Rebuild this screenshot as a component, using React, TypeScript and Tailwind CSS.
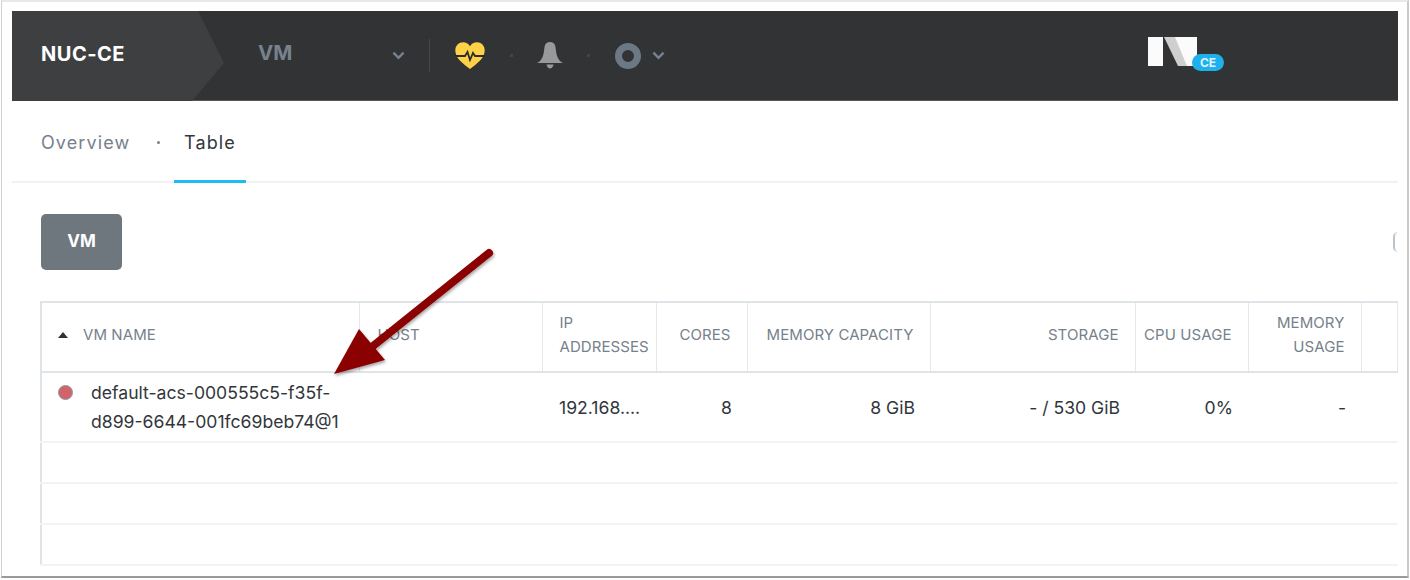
import React from "react";

const Chevron = ({ className }: { className: string }) => (
  <svg viewBox="0 0 14 9" className={className} fill="none" stroke="#76838e" strokeWidth="2.6">
    <path d="M1.5 1.5 7 7l5.5-5.5" />
  </svg>
);

const th = "border-r border-b-2 border-[#e3e8ec] border-b-[#dfe4e8] font-normal text-[15px] tracking-[0.08px] leading-[24px] text-[#76818b] align-middle pb-[5px]";
const td = "border-b-2 border-[#f2f3f5] text-[17.6px] leading-[29px] text-[#32363b] align-middle";

export default function App() {
  return (
    <div className="w-[1410px] h-[580px] bg-white overflow-hidden font-['Inter',sans-serif]">
      <div className="relative h-[578px] ml-[1px] mr-[1px] border-l border-r-2 border-t-2 border-b-2 border-l-[#cfcfcf] border-r-[#c9c9c9] border-t-[#e8e8e8] border-b-[#9a9a9a] pl-[10px] pr-[9px] pt-[9px] overflow-hidden">
        <div className="h-[90px] flex items-center bg-[#323335] border-b border-[#55575a] relative">
          <div className="relative h-full w-[212px] shrink-0 flex items-center pl-[29px]">
            <svg viewBox="0 0 212 90" className="absolute inset-0 w-[212px] h-[90px]">
              <polygon points="0,0 186,0 212,52 180,90 0,90" fill="#3e3f41" />
            </svg>
            <span className="relative text-white font-bold text-[20px] tracking-[0.5px] mt-[-4px]">NUC-CE</span>
          </div>
          <span className="ml-[34px] w-[134px] shrink-0 text-[#76838e] font-bold text-[20.500px] mt-[-4px]">VM</span>
          <Chevron className="w-[13px] h-[9px] shrink-0" />
          <div className="ml-[24px] w-px h-[33px] bg-[#46484a] shrink-0" />
          <svg viewBox="0 0 30 27" className="ml-[25px] w-[30px] h-[27px] shrink-0">
            <path d="M15 27C8 21.500 .5 16.500 .3 8.500 .2 3.500 4 .3 8 .3c3 0 5.500 1.500 7 4 1.500-2.500 4-4 7-4 4 0 7.800 3.200 7.700 8.200C29.500 16.500 22 21.500 15 27Z" fill="#fed146" />
            <path d="M0 14h10l2.500-4 2.500 8 3-7 2 3h10" fill="none" stroke="#2b2c2e" strokeWidth="1.800" />
          </svg>
          <div className="ml-[25px] w-[3px] h-[3px] bg-[#424446] shrink-0" />
          <svg viewBox="0 0 26 27" className="ml-[24px] w-[26px] h-[27px] shrink-0" fill="#97999b">
            <path d="M13 0c3 0 5 1.800 5.500 5 .6 4 .5 8 3 12 1 1.700 2.500 3.300 4.500 4H0c2-.7 3.500-2.300 4.500-4 2.500-4 2.400-8 3-12C8 1.800 10 0 13 0Z" />
            <path d="M9.500 22.500h7c-.5 2.500-2 4-3.500 4s-3-1.500-3.500-4Z" />
          </svg>
          <div className="ml-[24px] w-[3px] h-[3px] bg-[#424446] shrink-0" />
          <div className="ml-[25px] w-[26px] h-[26px] rounded-full border-[7px] border-[#6c7883] shrink-0" />
          <Chevron className="ml-[11px] w-[13px] h-[9px] shrink-0" />
          <div className="relative ml-[483px] w-[76px] h-[34px] shrink-0 mt-[-4px]">
            <svg viewBox="0 0 49 29" className="absolute left-0 top-0 w-[49px] h-[29px]">
              <polygon points="0,0 15,0 15,29 0,29" fill="#fbfbfb" />
              <polygon points="16,0 30,0 42,29 30,29" fill="#cfcfcf" />
              <polygon points="27,0 49,0 49,29 39,29" fill="#fbfbfb" />
            </svg>
            <div className="absolute left-[44px] top-[17px] w-[32px] h-[17px] rounded-full bg-[#1fb0ee] text-[#dff4fd] font-bold text-[12px] leading-[17px] text-center">CE</div>
          </div>
        </div>

        <div className="h-[82px] border-b-2 border-[#f1f2f4] flex items-stretch pl-[29px] text-[18px] tracking-[1.1px]">
          <span className="self-center w-[116px] text-[#76818b] mt-[2px]">Overview</span>
          <span className="self-center w-[3px] h-[3px] rounded-full bg-[#76818b] mt-[2px]" />
          <div className="ml-[14px] w-[72px] h-[82px] border-b-[3px] border-[#1ebcf2] flex items-center justify-center text-[#33373b]">
            <span className="mt-[4px]">Table</span>
          </div>
        </div>

        <div className="relative h-[384px] overflow-hidden pl-[29px] pt-[31px]">
          <div className="flex items-center justify-between h-[56px]">
            <div className="w-[81px] h-[56px] rounded-[5px] bg-[#6e767e] text-white font-bold text-[17px] flex items-center justify-center">VM</div>
            <div className="w-[5px] h-[20px] rounded-l-[5px] border-l-2 border-[#bcc4cb]" />
          </div>
          <table className="mt-[31px] ml-[-1px] w-[1358px] table-fixed border-collapse border-t-2 border-l-2 border-[#dfe4e8]">
            <colgroup>
              <col className="w-[318px]" />
              <col className="w-[183px]" />
              <col className="w-[114px]" />
              <col className="w-[91px]" />
              <col className="w-[183px]" />
              <col className="w-[205px]" />
              <col className="w-[113px]" />
              <col className="w-[113px]" />
              <col />
            </colgroup>
            <thead>
              <tr className="h-[70px]">
                <th className={`${th} text-left pl-[16px]`}>
                  <span className="flex items-center">
                    <span className="w-0 h-0 border-l-[5px] border-r-[5px] border-b-[6px] border-l-transparent border-r-transparent border-b-[#2e3235]" />
                    <span className="ml-[15px]">VM NAME</span>
                  </span>
                </th>
                <th className={`${th} text-left pl-[18px]`}>HOST</th>
                <th className={`${th} text-left pl-[17px]`}>IP<br />ADDRESSES</th>
                <th className={`${th} text-right pr-[16px]`}>CORES</th>
                <th className={`${th} text-right pr-[16px]`}>MEMORY CAPACITY</th>
                <th className={`${th} text-right pr-[16px]`}>STORAGE</th>
                <th className={`${th} text-right pr-[16px]`}>CPU USAGE</th>
                <th className={`${th} text-right pr-[16px]`}>MEMORY<br />USAGE</th>
                <th className={th} />
              </tr>
            </thead>
            <tbody>
              <tr className="h-[70px]">
                <td className={td + " pl-[16px]"}>
                  <div className="flex items-start">
                    <span className="mt-[7px] w-[15px] h-[15px] rounded-full bg-[#d4626a] border border-[#8b9aa5] shrink-0" />
                    <span className="ml-[18px]">default-acs-000555c5-f35f-<br />d899-6644-001fc69beb74@1</span>
                  </div>
                </td>
                <td className={td} />
                <td className={td + " pl-[17px]"}>192.168....</td>
                <td className={td + " text-right pr-[15px]"}>8</td>
                <td className={td + " text-right pr-[15px]"}>8 GiB</td>
                <td className={td + " text-right pr-[15px]"}>- / 530 GiB</td>
                <td className={td + " text-right pr-[15px]"}>0%</td>
                <td className={td + " text-right pr-[15px]"}>-</td>
                <td className={td} />
              </tr>
              {[0, 1, 2].map((i) => (
                <tr key={i} className="h-[41px]">
                  <td colSpan={9} className="border-b-2 border-[#f2f3f5]" />
                </tr>
              ))}
            </tbody>
          </table>
          <svg viewBox="0 0 170 135" className="absolute left-[321px] top-[63px] w-[170px] h-[135px]">
            <defs>
              <filter id="s" x="-20%" y="-20%" width="140%" height="140%">
                <feDropShadow dx="1" dy="2" stdDeviation="1.500" floodColor="#000" floodOpacity="0.35" />
              </filter>
            </defs>
            <g filter="url(#s)" fill="#8b0000">
              <line x1="156" y1="7" x2="40" y2="100" stroke="#8b0000" strokeWidth="8" strokeLinecap="round" />
              <polygon points="1,128 26,83 52,114" />
            </g>
          </svg>
        </div>
      </div>
    </div>
  );
}
